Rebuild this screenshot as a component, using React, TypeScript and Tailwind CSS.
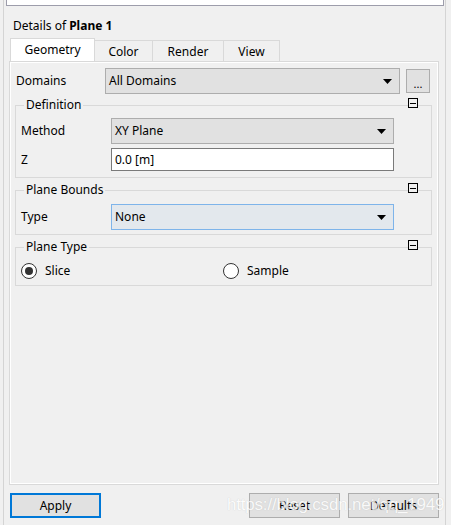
import React from "react";

const font = { fontFamily: '"Noto Sans", "Open Sans", Arial, sans-serif' };

function Arrow() {
  return (
    <svg width="9" height="5" viewBox="0 0 9 5" className="shrink-0">
      <path d="M0 0 H9 L4.5 5 Z" fill="#000" />
    </svg>
  );
}

function Minus() {
  return (
    <span className="absolute right-[13px] top-[-15px] flex h-[10px] w-[10px] items-center justify-center border border-black bg-[#f0f0f0]">
      <span className="h-px w-[6px] bg-black" />
    </span>
  );
}

function Select({ value, focus }: { value: string; focus?: boolean }) {
  return (
    <div
      className={
        "flex h-[26px] items-center justify-between border pl-[3px] pr-[7px] " +
        (focus ? "border-[#7eb4ea] bg-[#e3e8ed]" : "border-[#adadad] bg-[#e1e1e1]")
      }
    >
      <span>{value}</span>
      <Arrow />
    </div>
  );
}

function Group({
  title,
  children,
  className,
}: {
  title: string;
  children: React.ReactNode;
  className?: string;
}) {
  return (
    <fieldset className={"relative border border-[#d9d9d9] " + (className ?? "")}>
      <legend className="ml-[8px] px-[2px] leading-[16px]">{title}</legend>
      <Minus />
      {children}
    </fieldset>
  );
}

function Radio({ checked, label }: { checked?: boolean; label: string }) {
  return (
    <div className="flex items-center gap-[8px]">
      <span className="flex h-[16px] w-[16px] items-center justify-center rounded-full border border-[#333] bg-white">
        {checked && <span className="h-[8px] w-[8px] rounded-full bg-[#333]" />}
      </span>
      <span>{label}</span>
    </div>
  );
}

export default function App() {
  return (
    <div
      style={font}
      className="relative h-[525px] w-[451px] overflow-hidden bg-[#f0f0f0] pl-[3px] pr-[5px] text-[12px] text-black"
    >
      <div className="flex h-full flex-col border-x border-[#d4d4d4]">
        {/* cut-off top box */}
        <div className="ml-[2px] mr-[1px] h-[6px] border-x border-b border-[#9d9dab] bg-white" />

        <div className="mt-[12px] pl-[9px] leading-[16px]">
          Details of <span className="font-bold">Plane 1</span>
        </div>

        {/* tabs */}
        <div className="ml-[6px] mt-[4px] flex h-[24px] items-end">
          <div className="flex h-[24px] w-[85px] items-center justify-center border-x border-t border-[#d9d9d9] bg-white pb-[1px]">
            Geometry
          </div>
          <div className="flex h-[22px] w-[58px] items-center justify-center border-r border-t border-[#d9d9d9]">
            Color
          </div>
          <div className="flex h-[22px] w-[71px] items-center justify-center border-r border-t border-[#d9d9d9]">
            Render
          </div>
          <div className="flex h-[22px] w-[56px] items-center justify-center border-r border-t border-[#d9d9d9]">
            View
          </div>
        </div>

        {/* panel */}
        <div className="ml-[5px] mr-[6px] -mt-px flex h-[424px] flex-col border border-[#d9d9d9] px-[5px] shadow-[inset_1px_1px_0_#fff,inset_-1px_-1px_0_#fff]">
          <div className="mt-[6px] flex items-center">
            <span className="w-[90px] pl-[1px]">Domains</span>
            <div className="w-[295px]">
              <Select value="All Domains" />
            </div>
            <div className="ml-[6px] flex h-[24px] w-[24px] items-end justify-center border border-[#adadad] bg-[#e1e1e1] pb-[3px] text-[11px] leading-[11px]">
              ...
            </div>
          </div>

          <Group title="Definition" className="mt-[3px] mr-[1px] h-[81px]">
            <div className="mt-[5px] flex items-center">
              <span className="w-[95px] pl-[5px]">Method</span>
              <div className="w-[283px]">
                <Select value="XY Plane" />
              </div>
            </div>
            <div className="mt-[4px] flex items-center">
              <span className="w-[95px] pl-[5px]">Z</span>
              <div className="flex h-[23px] w-[283px] items-center border border-[#7a7a7a] bg-white pl-[3px]">
                0.0 [m]
              </div>
            </div>
          </Group>

          <Group title="Plane Bounds" className="mt-[4px] mr-[1px] h-[53px]">
            <div className="mt-[6px] flex items-center">
              <span className="w-[95px] pl-[5px]">Type</span>
              <div className="w-[283px]">
                <Select value="None" focus />
              </div>
            </div>
          </Group>

          <Group title="Plane Type" className="mt-[4px] mr-[1px] h-[47px]">
            <div className="mt-[7px] flex items-center pl-[5px]">
              <div className="w-[202px]">
                <Radio checked label="Slice" />
              </div>
              <Radio label="Sample" />
            </div>
          </Group>
        </div>

        {/* buttons */}
        <div className="ml-[6px] mr-[6px] mt-[8px] flex items-center">
          <div className="flex h-[25px] w-[91px] items-center justify-center border-2 border-[#0078d7] bg-[#e1e1e1]">
            Apply
          </div>
          <div className="ml-auto flex h-[25px] w-[91px] items-center justify-center border border-[#adadad] bg-[#e1e1e1]">
            Reset
          </div>
          <div className="ml-[8px] flex h-[25px] w-[91px] items-center justify-center border border-[#adadad] bg-[#e1e1e1]">
            Defaults
          </div>
        </div>
      </div>

      {/* watermark */}
      <div
        className="pointer-events-none absolute left-[227px] top-[495px] whitespace-nowrap text-[17px] leading-[20px] text-white opacity-80"
        style={{
          fontFamily: '"Liberation Sans", Arial, sans-serif',
          letterSpacing: "-0.2px",
          textShadow: "0 0 1px rgba(160,160,160,0.6)",
        }}
      >
        https://blog.csdn.net/qq_1949
      </div>
    </div>
  );
}
